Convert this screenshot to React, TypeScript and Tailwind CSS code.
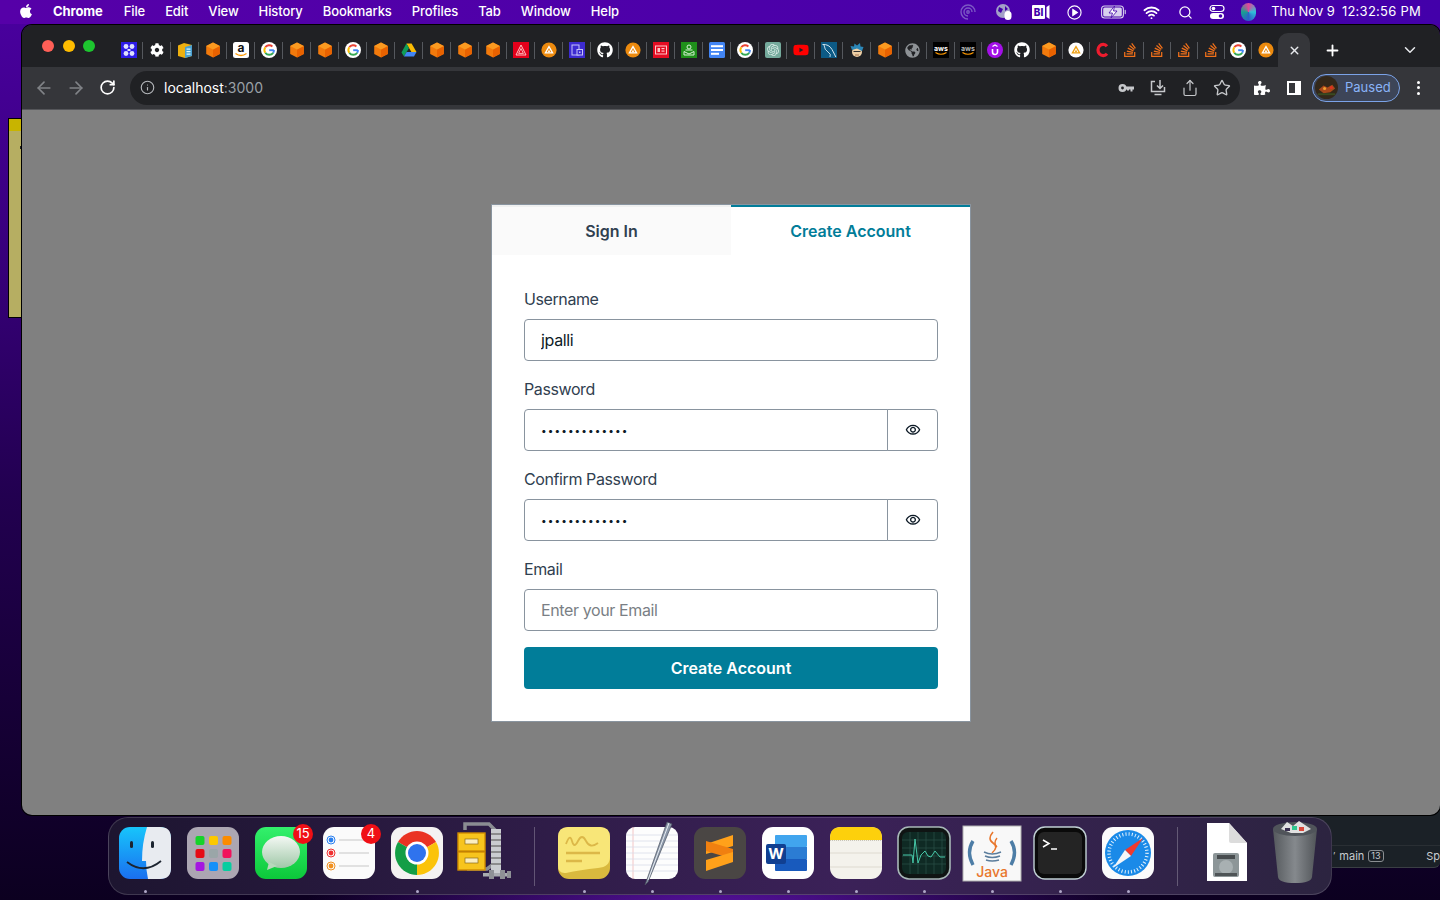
import { ReactNode } from "react";
import {
  ArrowLeft,
  ArrowRight,
  ChevronDown,
  Info,
  Plus,
  RotateCw,
  Search,
  Share,
  Star,
  Wifi,
  X,
} from "lucide-react";
import { FaApple, FaCog, FaGithub, FaGlobeAmericas, FaPuzzlePiece, FaStackOverflow, FaYoutube } from "react-icons/fa";
import { SiOpenai } from "react-icons/si";

const menuItems = ["File", "Edit", "View", "History", "Bookmarks", "Profiles", "Tab", "Window", "Help"];

/* ---------- favicons ---------- */

function Cube() {
  return (
    <svg viewBox="0 0 16 16" className="w-4 h-4">
      <polygon points="8,0.5 14.8,4 14.8,12 8,15.5 1.2,12 1.2,4" fill="#f27a0c" />
      <polygon points="8,7.5 14.8,4 14.8,12 8,15.5" fill="#e96200" />
      <polygon points="8,0.5 14.8,4 8,7.5 1.2,4" fill="#fb9a20" />
    </svg>
  );
}

function GoogleG() {
  return (
    <svg viewBox="0 0 16 16" className="w-4 h-4">
      <circle cx="8" cy="8" r="8" fill="#fff" />
      <path d="M12.8 8.2H8.2" stroke="#4285f4" strokeWidth="1.9" fill="none" />
      <path d="M12.2 10.8A5 5 0 0 0 12.9 8" stroke="#4285f4" strokeWidth="1.9" fill="none" />
      <path d="M4.3 5.2A5 5 0 0 1 11.4 4.4" stroke="#ea4335" strokeWidth="1.9" fill="none" />
      <path d="M4.3 10.8A5 5 0 0 1 4.3 5.2" stroke="#fbbc05" strokeWidth="1.9" fill="none" />
      <path d="M12.2 10.8A5 5 0 0 1 4.3 10.8" stroke="#34a853" strokeWidth="1.9" fill="none" />
    </svg>
  );
}

function TriangleCircle({ bg = "#ec8a0e", fg = "#fff" }: { bg?: string; fg?: string }) {
  return (
    <svg viewBox="0 0 16 16" className="w-4 h-4">
      <circle cx="8" cy="8" r="7.6" fill={bg} />
      <path d="M8 4.6 11.6 10.8H4.4Z" fill="none" stroke={fg} strokeWidth="1.3" />
      <path d="M8 7.6 9.3 10.2H6.7Z" fill={fg} />
    </svg>
  );
}

function Aws({ dim = false }: { dim?: boolean }) {
  return (
    <svg viewBox="0 0 16 16" className="w-4 h-4 overflow-visible">
      <rect width="16" height="16" fill="#000" />
      <text x="8" y="8.5" textAnchor="middle" fontSize="7" fontWeight="700" fontFamily="Inter, sans-serif" fill={dim ? "#b8b8b8" : "#fff"}>
        aws
      </text>
      <path d="M2.5 10.5Q8 14 13.5 10.5" stroke="#f90" strokeWidth="1.2" fill="none" />
    </svg>
  );
}

function Amazon() {
  return (
    <svg viewBox="0 0 16 16" className="w-4 h-4 overflow-visible">
      <rect width="16" height="16" rx="2.5" fill="#fff" />
      <text x="8" y="10" textAnchor="middle" fontSize="12" fontWeight="700" fontFamily="Inter, sans-serif" fill="#111">
        a
      </text>
      <path d="M2.5 11.5Q8 15.5 13.5 11.5" stroke="#f90" strokeWidth="1.4" fill="none" />
    </svg>
  );
}

function Figma4() {
  return (
    <svg viewBox="0 0 16 16" className="w-4 h-4">
      <rect width="16" height="16" fill="#2d1be8" />
      <circle cx="5" cy="4.5" r="2.4" fill="#dfe0ff" />
      <circle cx="11" cy="4.5" r="2.4" fill="#dfe0ff" />
      <circle cx="5" cy="11.5" r="2.4" fill="#dfe0ff" />
      <circle cx="11" cy="11.5" r="2.4" fill="#dfe0ff" />
      <rect x="6.5" y="7" width="3" height="2" fill="#dfe0ff" />
    </svg>
  );
}

function YellowBox() {
  return (
    <svg viewBox="0 0 16 16" className="w-4 h-4">
      <polygon points="1,3.5 7,1 15,3 15,14 8,16 1,14" fill="#eeb00f" />
      <polygon points="8,5 15,3 15,14 8,16" fill="#4a9fd0" />
      <rect x="9.5" y="6.5" width="4" height="1.2" fill="#dff" />
      <rect x="9.5" y="9" width="4" height="1.2" fill="#dff" />
      <rect x="9.5" y="11.5" width="4" height="1.2" fill="#dff" />
    </svg>
  );
}

function Drive() {
  return (
    <svg viewBox="0 0 16 16" className="w-4 h-4">
      <polygon points="5.4,1.5 10.6,1.5 15.5,10 10.4,10" fill="#fbbc04" />
      <polygon points="5.4,1.5 0.5,10.4 3,14.5 8,6" fill="#0f9d58" />
      <polygon points="5.6,10 15.5,10 13,14.5 3,14.5" fill="#4285f4" />
    </svg>
  );
}

function RedTriangle() {
  return (
    <svg viewBox="0 0 16 16" className="w-4 h-4">
      <rect width="16" height="16" fill="#e3001b" />
      <path d="M8 3 13 13H3Z" fill="none" stroke="#ffc4c4" strokeWidth="1" />
      <path d="M8 6.5 10.4 11.4H5.6Z" fill="none" stroke="#ffc4c4" strokeWidth="0.9" />
    </svg>
  );
}

function PurpleDoc() {
  return (
    <svg viewBox="0 0 16 16" className="w-4 h-4">
      <rect width="16" height="16" fill="#3d2bd0" />
      <rect x="3" y="3" width="7" height="10" fill="none" stroke="#c6c4f8" strokeWidth="1" />
      <rect x="8" y="7.5" width="5.5" height="5.5" fill="#3d2bd0" stroke="#c6c4f8" strokeWidth="1" />
      <rect x="10" y="9.5" width="1.5" height="1.5" fill="#c6c4f8" />
    </svg>
  );
}

function RedPanel() {
  return (
    <svg viewBox="0 0 16 16" className="w-4 h-4">
      <rect width="16" height="16" fill="#e30d22" />
      <rect x="2.5" y="4" width="11" height="8" fill="none" stroke="#ffc8c8" strokeWidth="1" />
      <rect x="4.5" y="6" width="2.5" height="4" fill="#ffc8c8" />
      <rect x="8.5" y="6" width="3" height="1.2" fill="#ffc8c8" />
      <rect x="8.5" y="8.5" width="3" height="1.2" fill="#ffc8c8" />
    </svg>
  );
}

function GreenStack() {
  return (
    <svg viewBox="0 0 16 16" className="w-4 h-4">
      <rect width="16" height="16" fill="#1f8f1a" />
      <circle cx="8" cy="5" r="2" fill="none" stroke="#d7f2d5" strokeWidth="1" />
      <path d="M3 9.5 8 12 13 9.5V13H3Z" fill="none" stroke="#d7f2d5" strokeWidth="1" />
      <path d="M4.5 8H11.5" stroke="#d7f2d5" strokeWidth="1" />
    </svg>
  );
}

function Docs() {
  return (
    <svg viewBox="0 0 16 16" className="w-4 h-4">
      <rect width="16" height="16" rx="1.5" fill="#4285f4" />
      <rect x="2" y="3.2" width="12" height="2" fill="#fff" />
      <rect x="2" y="7" width="12" height="2" fill="#fff" />
      <rect x="2" y="10.8" width="8" height="2" fill="#fff" />
    </svg>
  );
}

function Dolphin() {
  return (
    <svg viewBox="0 0 16 16" className="w-4 h-4">
      <rect width="16" height="16" fill="#0d5a85" />
      <path d="M1.5 2.5Q8 2 11 7.5T14.8 15" stroke="#d8e8f0" strokeWidth="1" fill="none" />
      <path d="M3 3Q3.5 8 7 10T9 15" stroke="#d8e8f0" strokeWidth="0.9" fill="none" />
    </svg>
  );
}

function Avatar() {
  return (
    <svg viewBox="0 0 16 16" className="w-4 h-4">
      <circle cx="8" cy="10" r="5" fill="#eecfa5" />
      <path d="M3 8 1.5 4 5 4.5 5.5 1.5 8 3.5 11 1 11.5 4.5 14.5 5 13 9 8 6.5Z" fill="#2b87b8" />
      <path d="M4.5 9.5H11.5" stroke="#333" strokeWidth="1" />
      <path d="M6 13H10" stroke="#a2704a" strokeWidth="1" />
    </svg>
  );
}

function Udemy() {
  return (
    <svg viewBox="0 0 16 16" className="w-4 h-4">
      <circle cx="8" cy="8" r="8" fill="#a30fe8" />
      <path d="M5.5 7v3a2.5 2.5 0 0 0 5 0V7" stroke="#fff" strokeWidth="1.6" fill="none" />
      <path d="M5.5 4.6 8 3l2.5 1.6" stroke="#fff" strokeWidth="1.2" fill="none" />
    </svg>
  );
}

function RedC() {
  return (
    <svg viewBox="0 0 16 16" className="w-4 h-4">
      <path d="M12 4.2A5.2 5.6 0 1 0 12 11.8" stroke="#ee1c2e" strokeWidth="3.2" fill="none" />
    </svg>
  );
}

function tile(bg: string, node: ReactNode) {
  return <span className={`flex w-4 h-4 items-center justify-center rounded-[2px] ${bg}`}>{node}</span>;
}

const favicons: ReactNode[] = [
  <Figma4 />,
  <FaCog className="w-[14px] h-[14px] text-white" />,
  <YellowBox />,
  <Cube />,
  <Amazon />,
  <GoogleG />,
  <Cube />,
  <Cube />,
  <GoogleG />,
  <Cube />,
  <Drive />,
  <Cube />,
  <Cube />,
  <Cube />,
  <RedTriangle />,
  <TriangleCircle />,
  <PurpleDoc />,
  <FaGithub className="w-4 h-4 text-white" />,
  <TriangleCircle />,
  <RedPanel />,
  <GreenStack />,
  <Docs />,
  <GoogleG />,
  tile("bg-[#74aa9c]", <SiOpenai className="w-3 h-3 text-[#d8ebe6]" />),
  <FaYoutube className="w-4 h-4 text-[#f00]" />,
  <Dolphin />,
  <Avatar />,
  <Cube />,
  <FaGlobeAmericas className="w-[15px] h-[15px] text-[#8e9296]" />,
  <Aws />,
  <Aws dim />,
  <Udemy />,
  <FaGithub className="w-4 h-4 text-white" />,
  <Cube />,
  <TriangleCircle bg="#fff" fg="#f0a010" />,
  <RedC />,
  <FaStackOverflow className="w-4 h-4 text-[#f0701a]" />,
  <FaStackOverflow className="w-4 h-4 text-[#f0701a]" />,
  <FaStackOverflow className="w-4 h-4 text-[#f0701a]" />,
  <FaStackOverflow className="w-4 h-4 text-[#f0701a]" />,
  <GoogleG />,
  <TriangleCircle />,
];

/* ---------- menu bar ---------- */

function MenuBar() {
  return (
    <div className="flex h-6 items-center justify-between pl-[18px] pr-[19px] text-[13px] font-medium text-white font-['Inter',sans-serif]">
      <div className="flex items-center tracking-[-0.1px]">
        <FaApple className="w-4 h-4 mr-[19px] -mt-[2px]" />
        <span className="font-bold mr-[21px]">Chrome</span>
        <div className="flex gap-5">
          {menuItems.map((item) => (
            <span key={item}>{item}</span>
          ))}
        </div>
      </div>
      <div className="flex items-center">
        <svg viewBox="0 0 18 18" className="w-[18px] h-[18px] mr-[18px]" fill="none" stroke="#7c58c4" strokeWidth="1.4">
          <path d="M9 16A7 7 0 1 1 16 9" />
          <path d="M9 13A4 4 0 1 1 13 9" />
          <circle cx="9" cy="9" r="1.2" />
        </svg>
        <svg viewBox="0 0 18 18" className="w-[18px] h-[18px] mr-[19px]">
          <circle cx="8" cy="8" r="7" fill="#a3a0c8" />
          <path d="M4 4 8 6 6 10 3 8ZM10 3 13 6 10 8Z" fill="#4300aa" />
          <rect x="9.5" y="8" width="7" height="9" rx="3.5" fill="#fff" />
        </svg>
        <svg viewBox="0 0 18 16" className="w-[18px] h-4 mr-[17px] overflow-visible">
          <rect x="0" y="1" width="13" height="14" rx="1" fill="#fff" />
          <text x="6.5" y="12" textAnchor="middle" fontSize="10" fontWeight="800" fontFamily="Inter, sans-serif" fill="#4300aa">
            BI
          </text>
          <path d="M14.5 3 17.5 1V15L14.5 13Z" fill="#fff" />
        </svg>
        <svg viewBox="0 0 16 16" className="w-[15px] h-[15px] mr-[19px]" fill="none" stroke="#fff" strokeWidth="1.2">
          <circle cx="8" cy="8" r="7" />
          <path d="M6.2 4.8 11 8 6.2 11.2Z" fill="#fff" />
        </svg>
        <svg viewBox="0 0 26 14" className="w-[26px] h-[14px] mr-[16px]">
          <rect x="0.6" y="1" width="21.8" height="12" rx="3" fill="none" stroke="#d8d0ee" strokeWidth="1.1" />
          <rect x="2.2" y="2.6" width="18.6" height="8.8" rx="1.5" fill="#d8d0ee" />
          <path d="M13.5 1 8 8H11.5L10 13 16 6H12.5Z" fill="#fff" stroke="#4300aa" strokeWidth="0.8" />
          <rect x="23.6" y="4.8" width="1.4" height="4.4" rx="0.7" fill="#b8a8e0" />
        </svg>
        <Wifi className="w-[17px] h-[17px] mr-[18px]" strokeWidth={2.6} />
        <Search className="w-[15px] h-[15px] mr-[16px]" strokeWidth={2} />
        <svg viewBox="0 0 16 16" className="w-4 h-4 mr-[16px]">
          <rect x="1" y="1.5" width="14" height="6" rx="3" fill="none" stroke="#fff" strokeWidth="1.2" />
          <circle cx="4.5" cy="4.5" r="1.8" fill="#fff" />
          <rect x="1" y="9" width="14" height="6" rx="3" fill="#fff" />
          <circle cx="11.5" cy="12" r="1.8" fill="#4300aa" />
        </svg>
        <span className="w-[15px] h-[18px] rounded-full mr-[15px] bg-[conic-gradient(#e0489a,#30c0d8,#2a60c8,#18a090,#e0489a)]" />
        <span className="mr-[7px] font-normal">Thu Nov 9</span>
        <span className="font-normal tracking-[0.25px]">12:32:56 PM</span>
      </div>
    </div>
  );
}

/* ---------- chrome ---------- */

function TabStrip() {
  return (
    <div className="flex h-[42px] pt-2 bg-[#202124] rounded-t-[10px]">
      <div className="flex w-[93px] shrink-0 items-center gap-[8.5px] pl-5 pb-[9px]">
        <span className="w-3 h-3 rounded-full bg-[#ff5f57]" />
        <span className="w-3 h-3 rounded-full bg-[#febc00]" />
        <span className="w-3 h-3 rounded-full bg-[#1dc52f]" />
      </div>
      <div className="flex items-center">
        {favicons.map((icon, i) => (
          <div
            key={i}
            className={`flex h-[17px] items-center justify-center ${i < 30 ? "w-7" : "w-[27px]"} ${
              i < favicons.length - 1 ? "border-r border-[#55585d]" : ""
            }`}
          >
            {icon}
          </div>
        ))}
      </div>
      <div className="ml-[-1px] flex w-8 items-center justify-center rounded-t-[10px] bg-[#35363a]">
        <X className="w-[13px] h-[13px] text-[#e8eaed]" strokeWidth={2.6} />
      </div>
      <div className="flex w-11 items-center justify-center">
        <Plus className="w-[17px] h-[17px] text-white" strokeWidth={2.6} />
      </div>
      <div className="ml-auto mr-[21px] flex items-center">
        <ChevronDown className="w-[18px] h-[18px] text-[#e8eaed]" strokeWidth={2} />
      </div>
    </div>
  );
}

function Toolbar() {
  return (
    <div className="flex h-[43px] items-center border-b border-[#55565a] bg-[#35363a] pb-[1px] font-['Inter',sans-serif]">
      <ArrowLeft className="ml-[12px] w-5 h-5 text-[#808387]" strokeWidth={2} />
      <ArrowRight className="ml-[12px] w-5 h-5 text-[#808387]" strokeWidth={2} />
      <RotateCw className="ml-[13px] w-[17px] h-[17px] text-white" strokeWidth={2.4} />
      <div className="ml-[14px] flex h-[34px] w-[1110px] items-center rounded-full bg-[#202124]">
        <Info className="ml-[10px] w-[15px] h-[15px] text-[#b4b7bb]" strokeWidth={1.8} />
        <span className="ml-[9px] text-[14px] text-white">
          localhost<span className="text-[#9aa0a6]">:3000</span>
        </span>
        <div className="ml-auto mr-[9px] flex items-center gap-[14px] text-[#c6c8cb]">
          <svg viewBox="0 0 18 18" className="w-[18px] h-[18px]" fill="#c6c8cb">
            <path d="M5.5 5A4 4 0 1 1 5.5 13 4 4 0 0 1 5.5 5ZM5.5 7.6A1.4 1.4 0 1 0 5.5 10.4 1.4 1.4 0 0 0 5.5 7.6Z" fillRule="evenodd" />
            <path d="M9 7.5H17V10.5H15.5V12.5H13.5V10.5H12V11.5H10V10.5H9Z" />
          </svg>
          <svg viewBox="0 0 18 18" className="w-[18px] h-[18px]" fill="none" stroke="#c6c8cb" strokeWidth="1.5">
            <path d="M6 2.5H2.5V12.5H15.5V8" />
            <path d="M11 1V9M8 6.5 11 9.5 14 6.5" />
            <path d="M5.5 15.5H12.5" />
          </svg>
          <Share className="w-[18px] h-[18px]" strokeWidth={1.6} />
          <Star className="w-[18px] h-[18px]" strokeWidth={1.8} />
        </div>
      </div>
      <FaPuzzlePiece className="ml-[14px] w-4 h-4 text-white" />
      <div className="ml-[17px] flex h-[14px] w-[14px] justify-end border-2 border-white">
        <div className="w-[4px] bg-white" />
      </div>
      <div className="ml-[11px] flex h-[28px] w-[88px] items-center gap-[7px] rounded-full border border-[#7ba3e8] bg-[#3d4558] pl-[2px]">
        <svg viewBox="0 0 24 24" className="w-[23px] h-[23px]">
          <circle cx="12" cy="12" r="12" fill="#33281a" />
          <path d="M4 14 9 10 13 12 18 9 21 13 16 17 9 18Z" fill="#a8481a" />
          <circle cx="10" cy="13" r="1.6" fill="#f0a030" />
          <circle cx="17" cy="12" r="1.6" fill="#e03020" />
          <path d="M3 19H21" stroke="#3a4a20" strokeWidth="2" />
        </svg>
        <span className="text-[13px] text-[#8ab4f8]">Paused</span>
      </div>
      <div className="ml-[17px] flex flex-col gap-[2.5px]">
        <span className="w-[3px] h-[3px] rounded-full bg-white" />
        <span className="w-[3px] h-[3px] rounded-full bg-white" />
        <span className="w-[3px] h-[3px] rounded-full bg-white" />
      </div>
    </div>
  );
}

/* ---------- form ---------- */

function EyeIcon() {
  return (
    <svg viewBox="0 0 24 24" className="w-4 h-4" fill="#0d1a26">
      <path d="M12 6c3.79 0 7.17 2.13 8.82 5.5C19.17 14.87 15.79 17 12 17s-7.17-2.13-8.82-5.5C4.83 8.13 8.21 6 12 6m0-2C7 4 2.73 7.11 1 11.5 2.73 15.89 7 19 12 19s9.27-3.11 11-7.5C21.27 7.11 17 4 12 4zm0 5c1.38 0 2.5 1.12 2.5 2.5S13.38 14 12 14s-2.5-1.12-2.5-2.5S10.62 9 12 9m0-2c-2.48 0-4.5 2.02-4.5 4.5S9.52 16 12 16s4.5-2.02 4.5-4.5S14.48 7 12 7z" />
    </svg>
  );
}

function Field({ label, children }: { label: string; children: ReactNode }) {
  return (
    <label className="flex flex-col gap-2">
      <span className="text-[16px] leading-6 tracking-[-0.4px] text-[#304050]">{label}</span>
      {children}
    </label>
  );
}

function PasswordField({ label }: { label: string }) {
  return (
    <Field label={label}>
      <div className="flex">
        <input
          type="password"
          readOnly
          value="password12345"
          className="h-[42px] min-w-0 flex-1 rounded-l-[4px] border border-[#89949f] px-4 text-[10px] tracking-[1.1px] text-[#0d1a26] outline-none"
        />
        <span className="flex h-[42px] w-[51px] -ml-px items-center justify-center rounded-r-[4px] border border-[#89949f]">
          <EyeIcon />
        </span>
      </div>
    </Field>
  );
}

function SignUpCard() {
  return (
    <div className="w-[480px] border border-[#89949f] bg-white font-['Inter',sans-serif]">
      <div className="grid grid-cols-2">
        <div className="flex h-[50px] items-center justify-center border-t-2 border-[#eff0f0] bg-[#fafafa] text-[16px] font-semibold text-[#304050]">
          Sign In
        </div>
        <div className="flex h-[50px] items-center justify-center border-t-2 border-[#017d99] text-[16px] font-semibold text-[#017d99]">
          Create Account
        </div>
      </div>
      <form className="flex flex-col gap-4 p-8">
        <Field label="Username">
          <input
            readOnly
            value="jpalli"
            className="h-[42px] rounded-[4px] border border-[#89949f] px-4 text-[16px] tracking-[-0.35px] text-[#0d1a26] outline-none"
          />
        </Field>
        <PasswordField label="Password" />
        <PasswordField label="Confirm Password" />
        <Field label="Email">
          <input
            readOnly
            placeholder="Enter your Email"
            className="h-[42px] rounded-[4px] border border-[#89949f] px-4 text-[16px] tracking-[-0.38px] text-[#0d1a26] outline-none placeholder:text-[#7a7f85]"
          />
        </Field>
        <button type="button" className="h-[42px] rounded-[4px] bg-[#017d99] text-[16px] font-semibold text-white">
          Create Account
        </button>
      </form>
    </div>
  );
}

/* ---------- dock ---------- */

function DockSvg({ children }: { children: ReactNode }) {
  return (
    <svg viewBox="0 0 52 52" className="w-[52px] h-[52px] overflow-visible">
      {children}
    </svg>
  );
}

function Finder() {
  return (
    <DockSvg>
      <defs>
        <linearGradient id="fb" x1="0" y1="0" x2="0" y2="1">
          <stop offset="0" stopColor="#17c5fb" />
          <stop offset="1" stopColor="#1a6ff0" />
        </linearGradient>
      </defs>
      <rect width="52" height="52" rx="11" fill="url(#fb)" />
      <path d="M28 0H41Q52 0 52 11V41Q52 52 41 52H29Q27 42 27 34H23Q23 16 28 0Z" fill="#e8ebf0" />
      <rect x="11" y="14" width="3" height="7" rx="1.5" fill="#1c2430" />
      <rect x="32" y="14" width="3" height="7" rx="1.5" fill="#1c2430" />
      <path d="M8 35Q25 48 42 34" stroke="#1c2430" strokeWidth="1.8" fill="none" />
    </DockSvg>
  );
}

function Launchpad() {
  const colors = ["#16d32a", "#fdc800", "#fb8b00", "#e60a16", "#9aa6a8", "#f0125c", "#a415e0", "#1590f8", "#08cda0"];
  return (
    <DockSvg>
      <rect width="52" height="52" rx="11" fill="#aca6b2" />
      {colors.map((c, i) => (
        <rect key={c} x={8.5 + (i % 3) * 13.5} y={9 + Math.floor(i / 3) * 13} width="9" height="9" rx="2" fill={c} />
      ))}
    </DockSvg>
  );
}

function Messages() {
  return (
    <DockSvg>
      <defs>
        <linearGradient id="mg" x1="0" y1="0" x2="0" y2="1">
          <stop offset="0" stopColor="#33f06c" />
          <stop offset="1" stopColor="#0cc83a" />
        </linearGradient>
        <linearGradient id="mb" x1="0" y1="0" x2="0" y2="1">
          <stop offset="0" stopColor="#f4f8f4" />
          <stop offset="1" stopColor="#a0c8a8" />
        </linearGradient>
      </defs>
      <rect width="52" height="52" rx="11" fill="url(#mg)" />
      <ellipse cx="26" cy="25" rx="19" ry="16" fill="url(#mb)" />
      <path d="M14 35 12 43 22 39Z" fill="#b8d8bc" />
    </DockSvg>
  );
}

function Reminders() {
  const rows: [number, string][] = [
    [13, "#2a80f0"],
    [26, "#f03030"],
    [39, "#f09020"],
  ];
  return (
    <DockSvg>
      <rect width="52" height="52" rx="11" fill="#fbfbfb" />
      {rows.map(([y, c]) => (
        <g key={y}>
          <circle cx="8" cy={y} r="4" fill="none" stroke={c} strokeWidth="1" />
          <circle cx="8" cy={y} r="2.4" fill={c} />
          <rect x="16" y={y - 0.7} width="30" height="1.4" fill="#d6d6d6" />
        </g>
      ))}
    </DockSvg>
  );
}

function ChromeIcon() {
  return (
    <DockSvg>
      <rect width="52" height="52" rx="11" fill="#f4f2f2" />
      <path d="M26 26 7 15A22 22 0 0 1 45 15Z" fill="#ea3323" />
      <path d="M26 26 45 15A22 22 0 0 1 26 48Z" fill="#fbc30a" />
      <path d="M26 26 26 48A22 22 0 0 1 7 15Z" fill="#139e46" />
      <circle cx="26" cy="26" r="11.5" fill="#fff" />
      <circle cx="26" cy="26" r="9" fill="#2f73ee" />
    </DockSvg>
  );
}

function Archive() {
  return (
    <DockSvg>
      <path d="M6 3V-3H30L37 4" fill="none" stroke="#8a8c92" strokeWidth="3.5" />
      <path d="M8 42H28L36 36" fill="none" stroke="#8a8c92" strokeWidth="3.5" />
      <rect x="32" y="2" width="10" height="44" fill="#c9ccd0" />
      <path d="M32 7H42M32 13H42M32 19H42M32 25H42M32 31H42M32 37H42" stroke="#777" strokeWidth="1.4" />
      <rect x="24" y="46" width="28" height="3.5" fill="#a8abb0" />
      <rect x="30" y="43" width="5" height="9" fill="#8e9196" />
      <rect x="41" y="43" width="5" height="9" fill="#8e9196" />
      <rect x="48" y="44" width="4" height="7" fill="#8e9196" />
      <rect x="-1" y="6" width="27" height="18" fill="#f7c41d" stroke="#d08c00" strokeWidth="1.4" />
      <rect x="-1" y="25" width="27" height="18" fill="#f7c41d" stroke="#d08c00" strokeWidth="1.4" />
      <rect x="6" y="12" width="13" height="5" fill="#fbeec0" stroke="#8a6a1a" strokeWidth="0.7" />
      <rect x="6" y="31" width="13" height="5" fill="#fbeec0" stroke="#8a6a1a" strokeWidth="0.7" />
    </DockSvg>
  );
}

function Stickies() {
  return (
    <DockSvg>
      <rect width="52" height="52" rx="11" fill="#d9b93e" />
      <path d="M0 10Q0 0 10 0H42Q52 0 52 10V30Q52 40 40 41 22 43 8 46 0 47 0 38Z" fill="#f8e678" />
      <path d="M8 17Q12 6 14 14T20 14 28 14 40 16" stroke="#dcb848" strokeWidth="1.8" fill="none" />
      <path d="M8 26H42M8 34H24" stroke="#dcb848" strokeWidth="2.6" />
    </DockSvg>
  );
}

function TextEdit() {
  return (
    <DockSvg>
      <rect width="52" height="52" rx="9" fill="#fdfdfd" />
      <path d="M7 0V52" stroke="#f0b8b8" strokeWidth="0.8" />
      {[8, 14, 20, 26, 32, 38, 44].map((y) => (
        <path key={y} d={`M0 ${y}H52`} stroke="#d8dce8" strokeWidth="0.8" />
      ))}
      <path d="M41 -5 46 -3 22 55 19 58Z" fill="#8c98aa" stroke="#4a5260" strokeWidth="0.7" />
      <path d="M43 -4 22 53" stroke="#e8edf2" strokeWidth="1" />
    </DockSvg>
  );
}

function Sublime() {
  return (
    <DockSvg>
      <rect width="52" height="52" rx="11" fill="#4a4644" />
      <polygon points="39,8 39,19 12,27 12,17" fill="#ffa11a" />
      <polygon points="12,24 39,32 39,22 12,14" fill="#f08010" />
      <polygon points="39,25 39,35 12,44 12,33" fill="#ffa11a" />
    </DockSvg>
  );
}

function Word() {
  return (
    <DockSvg>
      <rect width="52" height="52" rx="11" fill="#fff" />
      <rect x="13" y="8" width="32" height="12" rx="1" fill="#41a5ee" />
      <rect x="13" y="20" width="32" height="12" fill="#2b7cd3" />
      <rect x="13" y="32" width="32" height="12" rx="1" fill="#185abd" />
      <rect x="4" y="17" width="20" height="20" rx="2" fill="#103f91" />
      <text x="14" y="32" textAnchor="middle" fontSize="15" fontWeight="700" fontFamily="Inter, sans-serif" fill="#fff">
        W
      </text>
    </DockSvg>
  );
}

function Notes() {
  return (
    <DockSvg>
      <rect width="52" height="52" rx="11" fill="#f4f2ec" />
      <path d="M0 13V11Q0 0 11 0H41Q52 0 52 11V13Z" fill="#fdd00c" />
      <path d="M0 13.5H52" stroke="#c8c4b8" strokeWidth="1" strokeDasharray="1 1" />
      <path d="M0 26H52M0 40H52" stroke="#dedad0" strokeWidth="1" />
    </DockSvg>
  );
}

function ActivityMonitor() {
  return (
    <DockSvg>
      <rect width="52" height="52" rx="11" fill="#0f1413" stroke="#a8b8b8" strokeWidth="1.6" />
      <rect x="4" y="5" width="44" height="42" rx="6" fill="#0f2a24" />
      {[12, 20, 28, 36, 44].map((x) => (
        <path key={x} d={`M${x} 5V47`} stroke="#2c5048" strokeWidth="0.7" />
      ))}
      {[13, 21, 29, 37].map((y) => (
        <path key={y} d={`M4 ${y}H48`} stroke="#2c5048" strokeWidth="0.7" />
      ))}
      <path d="M5 28H14L15 36 17 12 20 36 23 28 27 24 30 29 33 30 37 24 42 30H47" stroke="#46c8a8" strokeWidth="1" fill="none" />
    </DockSvg>
  );
}

function JavaIcon() {
  return (
    <DockSvg>
      <rect x="-3" y="-1" width="58" height="55" fill="#f8f8f8" stroke="#b0b0b0" strokeWidth="1" />
      <path d="M7 14Q0 25 7 38" stroke="#4d7da6" strokeWidth="3.4" fill="none" />
      <path d="M45 14Q52 25 45 38" stroke="#4d7da6" strokeWidth="3.4" fill="none" />
      <path d="M27 5Q21 12 27 16T26 26" stroke="#e8762c" strokeWidth="1.6" fill="none" />
      <path d="M31 11Q27 16 31 20" stroke="#e8762c" strokeWidth="1.4" fill="none" />
      <path d="M18 25Q26 29 35 25M19 29Q26 32 34 29M20 33Q26 35 33 33" stroke="#5b7d9c" strokeWidth="1.4" fill="none" />
      <text x="26" y="50" textAnchor="middle" fontSize="14" fontWeight="500" fontFamily="Inter, sans-serif" fill="#e8762c">
        Java
      </text>
    </DockSvg>
  );
}

function Terminal() {
  return (
    <DockSvg>
      <rect width="52" height="52" rx="11" fill="#0a0a0a" stroke="#c0d0d4" strokeWidth="1.4" />
      <rect x="4" y="5" width="44" height="42" rx="6" fill="#242424" />
      <path d="M9 13 15 16.5 9 20" stroke="#fff" strokeWidth="1.5" fill="none" />
      <path d="M17 22H23" stroke="#fff" strokeWidth="1.5" />
    </DockSvg>
  );
}

function Safari() {
  return (
    <DockSvg>
      <rect width="52" height="52" rx="11" fill="#fbfbfb" />
      <circle cx="26" cy="26" r="23" fill="#1a8ae8" />
      <circle cx="26" cy="26" r="19" fill="none" stroke="#e4f2fc" strokeWidth="3.5" strokeDasharray="1 2.2" />
      <polygon points="41,11 29,29 23,23" fill="#f03a2e" />
      <polygon points="11,41 29,29 23,23" fill="#f4f6f8" />
    </DockSvg>
  );
}

function DiskDoc() {
  return (
    <DockSvg>
      <path d="M6 -4H28L46 16V54H6Z" fill="#fff" />
      <path d="M28 -4 46 16H30Q28 16 28 14Z" fill="#dcdcdc" />
      <rect x="12" y="26" width="26" height="24" rx="2" fill="#8d9698" />
      <rect x="16" y="28" width="18" height="4" fill="#474c4e" />
      <circle cx="25" cy="40" r="7" fill="#a8b0b2" />
      <rect x="14" y="46" width="22" height="3" fill="#4e5456" />
    </DockSvg>
  );
}

function Trash() {
  return (
    <DockSvg>
      <defs>
        <linearGradient id="tg" x1="0" y1="0" x2="1" y2="0">
          <stop offset="0" stopColor="#55595d" />
          <stop offset="0.5" stopColor="#85898d" />
          <stop offset="1" stopColor="#505458" />
        </linearGradient>
      </defs>
      <path d="M4 2 9 50Q10 56 26 56 42 56 43 50L48 2Z" fill="url(#tg)" />
      <ellipse cx="26" cy="2" rx="22" ry="7" fill="#50545a" />
      <path d="M12 2 18 -5 24 -1 30 -6 36 -2 42 2 34 6 22 6Z" fill="#e0e0e0" />
      <rect x="23" y="-1" width="5" height="4" fill="#30c890" />
      <rect x="30" y="0" width="5" height="4" fill="#d8483a" />
      <rect x="16" y="1" width="5" height="3" fill="#3a3050" />
    </DockSvg>
  );
}

function DockItem({ icon, running, badge }: { icon: ReactNode; running?: boolean; badge?: string }) {
  return (
    <div className="relative flex flex-col items-center">
      {icon}
      <span className={`mt-[11px] w-[3px] h-[3px] rounded-full ${running ? "bg-[#b0a8c8]" : ""}`} />
      {badge && (
        <span className="absolute -top-[3px] -right-[6px] flex w-5 h-5 items-center justify-center rounded-full bg-[#f00f15] text-[13px] text-white font-['Inter',sans-serif]">
          {badge}
        </span>
      )}
    </div>
  );
}

function Dock() {
  return (
    <div className="absolute left-[108px] top-[817px] flex h-[78px] w-[1224px] items-start gap-4 rounded-[20px] border border-white/15 bg-[linear-gradient(90deg,#1d1530,#3b2158_60%,#2c2440)] pl-[10px] pt-[9px]">
      <DockItem icon={<Finder />} running />
      <DockItem icon={<Launchpad />} />
      <DockItem icon={<Messages />} badge="15" />
      <DockItem icon={<Reminders />} badge="4" />
      <DockItem icon={<ChromeIcon />} running />
      <DockItem icon={<Archive />} />
      <div className="flex w-[15px] justify-center">
        <div className="w-px h-[59px] bg-white/25" />
      </div>
      <DockItem icon={<Stickies />} running />
      <DockItem icon={<TextEdit />} running />
      <DockItem icon={<Sublime />} running />
      <DockItem icon={<Word />} running />
      <DockItem icon={<Notes />} running />
      <DockItem icon={<ActivityMonitor />} running />
      <DockItem icon={<JavaIcon />} running />
      <DockItem icon={<Terminal />} running />
      <DockItem icon={<Safari />} running />
      <div className="flex w-[15px] justify-center">
        <div className="w-px h-[59px] bg-white/25" />
      </div>
      <DockItem icon={<DiskDoc />} />
      <DockItem icon={<Trash />} />
    </div>
  );
}

export default function App() {
  return (
    <div className="relative h-[900px] w-[1440px] overflow-hidden bg-[radial-gradient(ellipse_420px_120px_at_720px_920px,#5c12a8_0%,rgba(92,18,168,0)_100%),linear-gradient(180deg,#4a00a0_0%,#3a0080_25%,#220050_55%,#0c0020_100%)]">
      <div className="relative z-30 bg-[linear-gradient(90deg,#5600a8,#4300aa)]">
        <MenuBar />
      </div>

      {/* sticky note behind chrome, left side */}
      <div className="absolute left-[8px] top-[118px] h-[200px] w-[20px] border border-black bg-[#b6ae62]">
        <div className="h-[12px] bg-[#c8b400]" />
        <div className="ml-[11px] mt-[15px] h-[3px] w-[3px] bg-[#222]" />
      </div>

      {/* terminal window peeking out below chrome */}
      <div className="absolute left-[1200px] top-[790px] flex h-[78px] w-[240px] items-end justify-end rounded-b-[6px] border-b border-[#3a3f44] bg-[#1b2127] pb-[3px] font-['Inter',sans-serif] text-[11px] text-[#c8ccd0]">
        <div className="flex w-[110px] items-center border-t border-[#2a2f34] pt-[2px]">
          <span className="ml-[3px] mr-[4px] text-[9px]">’</span>
          <span>main</span>
          <span className="ml-[4px] rounded-[3px] border border-[#8a8e92] px-[2px] text-[9px] leading-[10px]">13</span>
          <span className="ml-auto">Sp</span>
        </div>
      </div>

      <div className="absolute left-[22px] top-[25px] flex h-[790px] w-[1418px] flex-col rounded-[10px] shadow-[0_0_0_1px_#000]">
        <TabStrip />
        <Toolbar />
        <main className="flex flex-1 items-center justify-center rounded-b-[10px] bg-[#808080]">
          <SignUpCard />
        </main>
      </div>

      <Dock />
    </div>
  );
}
